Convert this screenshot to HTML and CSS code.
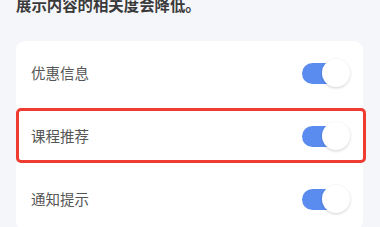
FILE: index.html
```html
<!DOCTYPE html>
<html lang="zh">
<head>
<meta charset="utf-8">
<link rel="stylesheet" href="styles.css">
</head>
<body>
<div class="intro">展示内容的相关度会降低。</div>
<div class="card">
  <div class="row">
    <span class="label">优惠信息</span>
    <span class="switch"><span class="track"></span><span class="knob"></span></span>
  </div>
  <div class="row highlighted">
    <span class="label">课程推荐</span>
    <span class="switch"><span class="track"></span><span class="knob"></span></span>
    <span class="mark"></span>
  </div>
  <div class="row">
    <span class="label">通知提示</span>
    <span class="switch"><span class="track"></span><span class="knob"></span></span>
  </div>
</div>
</body>
</html>
```
FILE: styles.css
```css
html, body {
  margin: 0;
  padding: 0;
  background: #f5f6f9;
  font-family: "Noto Sans CJK SC", "Noto Sans", sans-serif;
  overflow: hidden;
}
.intro {
  margin: -6px 0 0 16px;
  line-height: 20px;
  height: 18px;
  font-size: 15.4px;
  font-weight: 700;
  color: #3a3a3a;
}
.card {
  margin: 29px 17px 0 16px;
  background: #fff;
  border-radius: 9px;
}
.row {
  position: relative;
  height: 63px;
  display: flex;
  align-items: center;
  justify-content: space-between;
  padding: 0 13px 0 15px;
}
.label {
  font-size: 14.5px;
  color: #555;
}
.switch {
  position: relative;
  width: 48px;
  height: 28px;
  display: block;
}
.track {
  position: absolute;
  left: 0;
  top: 4px;
  width: 44px;
  height: 21px;
  border-radius: 11px;
  background: #5a8cf0;
}
.knob {
  position: absolute;
  right: 0;
  top: 0;
  width: 28px;
  height: 28px;
  border-radius: 50%;
  background: #fff;
  box-shadow: 0 1px 3px rgba(0,0,0,0.18);
}
.mark {
  position: absolute;
  top: 4px;
  bottom: 4px;
  left: 0;
  right: -3px;
  border: 3px solid #f03b30;
  border-radius: 5px;
  pointer-events: none;
}
```
